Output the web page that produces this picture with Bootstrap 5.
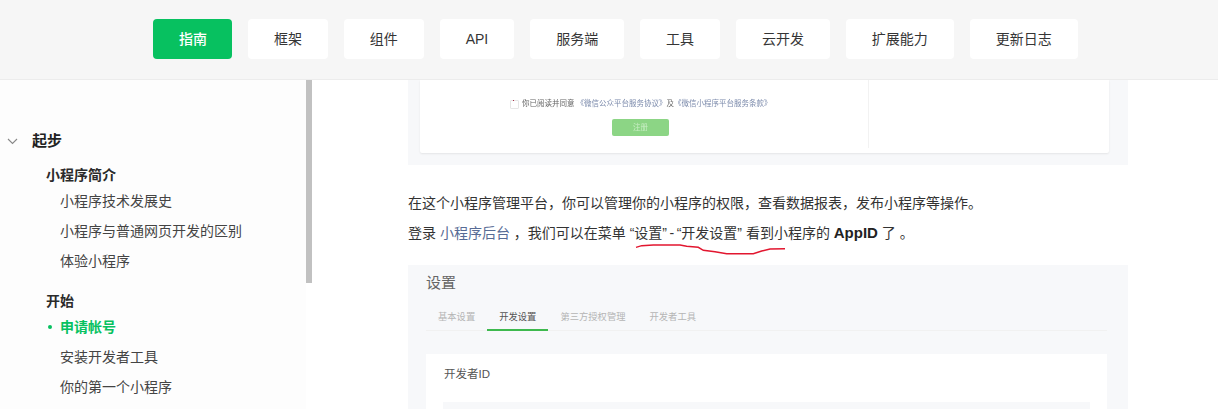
<!DOCTYPE html>
<html lang="zh-CN">
<head>
    <meta charset="UTF-8">
    <meta name="viewport" content="width=device-width, initial-scale=1.0">
    <title>申请帐号</title>
    <link href="https://cdn.jsdelivr.net/npm/bootstrap@5.3.0/dist/css/bootstrap.min.css" rel="stylesheet">
    <style>
        html, body { height: 409px; overflow: hidden; }
        body { font-family: "Liberation Sans", "Noto Sans CJK SC", sans-serif; font-size: 14px; color: #353535; background: #fff; }
        .top-bar { height: 80px; background: #f6f6f6; border-bottom: 1px solid #ececec; padding: 19px 0 0 153px; gap: 15.900px; }
        .top-btn { height: 40px; padding: 0 26px; font-size: 14px; line-height: 40px; color: #353535; background: #fff; border: 0; border-radius: 4px; }
        .top-btn.active-tab { background: #07c160; color: #fff; font-weight: 500; padding: 0 25px 0 26px; }
        .page-body { height: 329px; overflow: hidden; }

        .side-menu { width: 306px; height: 329px; padding-top: 49px; background: #fdfdfd; overflow: hidden; }
        .side-thumb { width: 6px; height: 203px; background: #c1c1c1; }
        .side-title { height: 24px; line-height: 24px; font-size: 15px; font-weight: 700; color: #222; padding-left: 7px; gap: 14px; }
        .side-group { margin: 10px 0 0 46px; height: 23px; line-height: 24px; font-weight: 700; color: #2b2b2b; }
        .side-group.next-group { margin-top: 13px; }
        .side-item { padding-left: 14px; height: 30px; line-height: 30px; color: #444; margin-left: 46px; }
        .side-item.current { color: #07c160; font-weight: 700; height: 28px; line-height: 28px; margin-top: 1px; margin-bottom: 1px; gap: 8px; padding-left: 2px; }
        .green-dot { width: 4px; height: 4px; background: #07c160; border-radius: 50%; }

        .doc-area { margin-left: 96px; width: 720px; position: relative; }
        .shot-box { background: #f7f8fa; }
        .shot-top { height: 85px; padding: 0 19px 12px 12px; }
        .shot-card { height: 73px; background: #fff; border-radius: 0 0 2px 2px; box-shadow: 0 1px 2px rgba(0, 0, 0, .08); }
        .shot-left { width: 449px; height: 68px; border-right: 1px solid #f2f2f2; padding-top: 19px; }
        .agree-line { font-size: 7.500px; line-height: 10px; color: #666; gap: 3px; padding-left: 90px; white-space: nowrap; filter: blur(.3px); }
        .agree-line a { color: #7b8aab; text-decoration: none; }
        .fake-check { width: 9px; height: 9px; border: 1px solid #e6e6e6; border-radius: 1px; background: #fff; position: relative; }
        .fake-check::before { content: ""; position: absolute; left: 2px; top: -1px; width: 1px; height: 1px; background: #b0304a; }
        .fake-btn { width: 57px; height: 17px; margin: 10px 0 0 192px; background: #8cd585; border-radius: 2px; color: #c9eec5; font-size: 7.500px; line-height: 17px; text-align: center; filter: blur(.3px); }

        .doc-text { margin: 0; height: 29px; line-height: 29px; white-space: nowrap; color: #333; }
        .doc-text.first-line { margin-top: 24px; }
        .doc-text a { color: #576b95; text-decoration: none; }
        .doc-text b { font-size: 15px; color: #222; }
        .dash-gap { margin: 0 2.500px; }
        .red-mark { position: absolute; left: 220px; top: 160px; width: 160px; height: 20px; }

        .shot-settings { height: 144px; margin-top: 18px; padding: 8px 21px 0 18px; }
        .set-title { font-size: 15px; line-height: 20px; color: #666; }
        .set-tabs { height: 24px; margin: 14px 0 0; border-bottom: 1px solid #f1f1f1; padding-left: 0; list-style: none; font-size: 9.300px; color: #b5b5b5; }
        .set-tabs li { padding: 0 12px; line-height: 20px; height: 24px; }
        .set-tabs li.on { color: #555; border-bottom: 2px solid #3eb94e; }
        .set-card { margin-top: 23px; height: 60px; background: #fff; padding: 11px 18px 0; width: 681px; }
        .set-label { font-size: 11.500px; line-height: 18px; color: #555; }
        .set-value { margin: 19px 0 0 -1px; height: 20px; width: 647px; background: #f7f8fa; }
    </style>
</head>
<body>
    <nav class="top-bar d-flex">
        <button class="btn top-btn active-tab">指南</button>
        <button class="btn top-btn">框架</button>
        <button class="btn top-btn">组件</button>
        <button class="btn top-btn">API</button>
        <button class="btn top-btn">服务端</button>
        <button class="btn top-btn">工具</button>
        <button class="btn top-btn">云开发</button>
        <button class="btn top-btn">扩展能力</button>
        <button class="btn top-btn">更新日志</button>
    </nav>

    <div class="page-body d-flex">
        <aside class="side-menu">
            <div class="side-title d-flex align-items-center">
                <svg width="11" height="12" viewBox="0 0 11 12"><path d="M1 4 5.500 8.500 10 4" fill="none" stroke="#888" stroke-width="1.100"/></svg>
                <span>起步</span>
            </div>
            <div class="side-group">小程序简介</div>
            <div class="side-item">小程序技术发展史</div>
            <div class="side-item">小程序与普通网页开发的区别</div>
            <div class="side-item">体验小程序</div>
            <div class="side-group next-group">开始</div>
            <div class="side-item current d-flex align-items-center"><span class="green-dot"></span><span>申请帐号</span></div>
            <div class="side-item">安装开发者工具</div>
            <div class="side-item">你的第一个小程序</div>
        </aside>
        <div class="side-thumb"></div>

        <main class="doc-area">
            <div class="shot-box shot-top">
                <div class="shot-card d-flex">
                    <div class="shot-left">
                        <div class="agree-line d-flex align-items-center">
                            <span class="fake-check"></span>
                            <span>你已阅读并同意 <a href="#">《微信公众平台服务协议》</a>及<a href="#">《微信小程序平台服务条款》</a></span>
                        </div>
                        <div class="fake-btn">注册</div>
                    </div>
                </div>
            </div>

            <p class="doc-text first-line">在这个小程序管理平台，你可以管理你的小程序的权限，查看数据报表，发布小程序等操作。</p>
            <p class="doc-text">登录 <a href="#">小程序后台</a> ，我们可以在菜单 “设置”<span class="dash-gap">-</span>“开发设置” 看到小程序的 <b>AppID</b> 了 。</p>
            <svg class="red-mark" viewBox="0 0 160 20"><polyline points="8,7.300 13.700,5.700 25.300,5 52,5 58.700,6.300 70.300,7.300 75.300,10.300 87,11.700 98.700,13.700 125.300,13.700 133.700,11 142,9 157,8.700" fill="none" stroke="#e2162f" stroke-width="1.400"/></svg>

            <section class="shot-box shot-settings">
                <div class="set-title">设置</div>
                <ul class="set-tabs d-flex">
                    <li>基本设置</li>
                    <li class="on">开发设置</li>
                    <li>第三方授权管理</li>
                    <li>开发者工具</li>
                </ul>
                <div class="set-card">
                    <div class="set-label">开发者ID</div>
                    <div class="set-value"></div>
                </div>
            </section>
        </main>
    </div>

    <script src="https://cdn.jsdelivr.net/npm/bootstrap@5.3.0/dist/js/bootstrap.bundle.min.js"></script>
</body>
</html>
